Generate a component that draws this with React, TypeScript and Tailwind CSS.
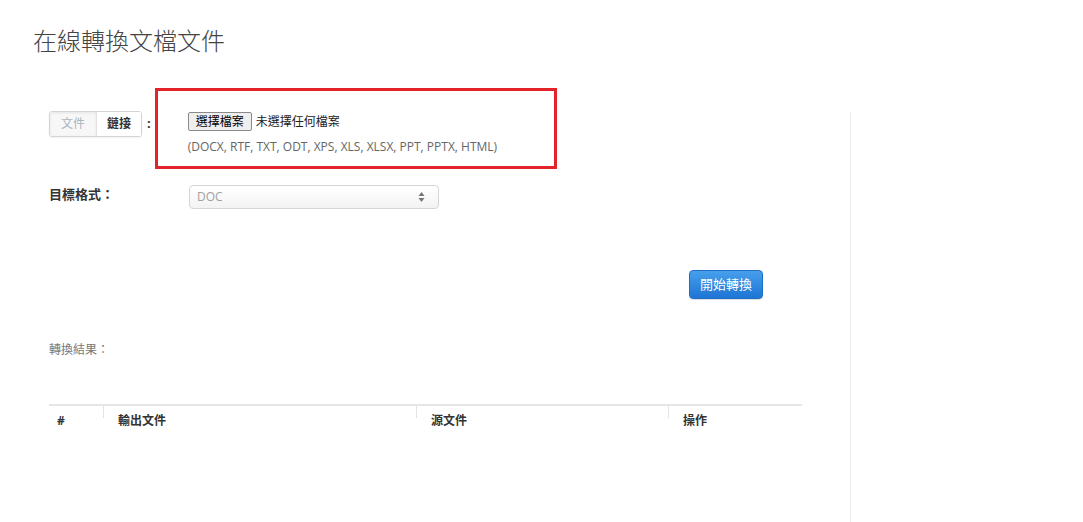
import React from "react";

const cjk = { fontFamily: '"Open Sans", "Noto Sans CJK TC", sans-serif' };

export default function App() {
  return (
    <div className="w-[1083px] h-[522px] overflow-hidden bg-white text-[#333]" style={cjk}>
      <div className="h-[88px] pl-[33px] pt-[26px]">
        <h1 className="text-[24px] leading-[30px] font-light text-[#444]">在線轉換文檔文件</h1>
      </div>
      <div className="flex items-start">
        <div className="w-[850px] pl-[49px]">
          {/* row 1 */}
          <div className="flex items-start">
            <div className="mt-[23px] flex h-[26px] rounded-[3px] border border-[#d4d4d4] text-[12px] leading-[24px] shadow-[0_1px_2px_rgba(0,0,0,0.06)]">
              <div className="w-[47px] text-center bg-[#f7f7f7] text-[#a9b4bf] border-r border-[#e2e2e2] shadow-[inset_0_1px_3px_rgba(0,0,0,0.08)]">文件</div>
              <div className="w-[44px] text-center font-bold text-[#333] bg-white">鏈接</div>
            </div>
            <div className="mt-[26px] ml-[5px] text-[13px] font-bold leading-[18px]">:</div>
            <div className="ml-[4px] w-[402px] h-[81px] border-[3px] border-[#e3222a] pl-[30px] pt-[21px]">
              <div className="flex items-center h-[19px] text-[12px]">
                <button className="h-[19px] px-[7px] bg-[#efefef] border border-[#8a8a8a] rounded-[2px] text-[12px] leading-[16px] text-black">選擇檔案</button>
                <span className="ml-[4px] text-[#222]">未選擇任何檔案</span>
              </div>
              <div className="mt-[8px] text-[12px] leading-[16px] text-[#666]">(DOCX, RTF, TXT, ODT, XPS, XLS, XLSX, PPT, PPTX, HTML)</div>
            </div>
          </div>
          {/* row 2 */}
          <div className="mt-[16px] flex items-center">
            <div className="w-[140px] text-[13px] font-bold text-[#333] -mt-[4px]">目標格式：</div>
            <div className="w-[250px] h-[24px] rounded-[4px] border border-[#d6d6d6] bg-gradient-to-b from-white to-[#f3f3f3] flex items-center justify-between pl-[7px] pr-[13px]">
              <span className="text-[12px] text-[#a0a0a0]">DOC</span>
              <svg width="7" height="12" viewBox="0 0 7 12">
                <path d="M3.5 1 L6.5 5 H0.5 Z" fill="#777" />
                <path d="M3.5 11 L6.5 7 H0.5 Z" fill="#777" />
              </svg>
            </div>
          </div>
          {/* button */}
          <div className="mt-[61px] pl-[640px]">
            <button className="w-[74px] h-[29px] rounded-[4px] border border-[#1f6fc5] bg-gradient-to-b from-[#46a0ec] to-[#1e74d4] text-white text-[13px] leading-[27px] shadow-[0_1px_1px_rgba(0,0,0,0.15)]">開始轉換</button>
          </div>
          {/* results */}
          <div className="mt-[43px] text-[12px] leading-[16px] text-[#777]">轉換結果：</div>
          <div className="mt-[46px] w-[753px] border-t-2 border-[#e6e6e6]">
            <div className="flex text-[12px] font-bold text-[#333]">
              <div className="w-[54px] pl-[8px] pt-[6px]">#</div>
              <div className="w-[313px] relative pl-[15px] pt-[6px]">
                <span className="absolute left-0 top-0 h-[12px] w-px bg-[#e3e3e3]" />
                輸出文件
              </div>
              <div className="w-[252px] relative pl-[15px] pt-[6px]">
                <span className="absolute left-0 top-0 h-[12px] w-px bg-[#e3e3e3]" />
                源文件
              </div>
              <div className="flex-1 relative pl-[15px] pt-[6px]">
                <span className="absolute left-0 top-0 h-[12px] w-px bg-[#e3e3e3]" />
                操作
              </div>
            </div>
          </div>
        </div>
        <div className="mt-[24px] w-px h-[420px] bg-[#ececec]" />
      </div>
    </div>
  );
}
